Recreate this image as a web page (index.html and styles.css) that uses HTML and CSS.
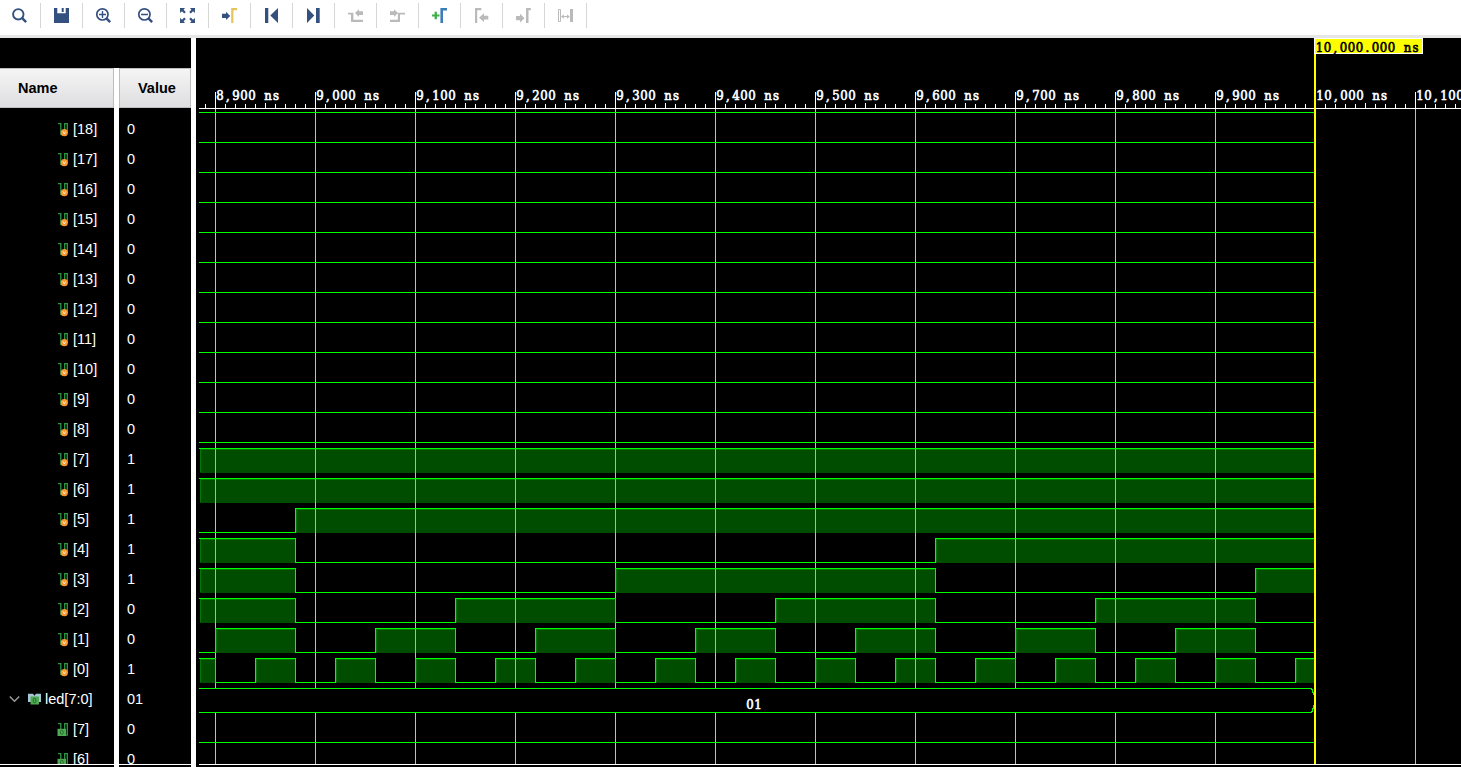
FILE: index.html
```html
<!DOCTYPE html>
<html lang="en">
<head>
<meta charset="utf-8">
<title>Waveform</title>
<link rel="stylesheet" href="styles.css">
</head>
<body>
<div class="toolbar">
  <span class="tool"><svg class="ico navy"><circle cx="6.3" cy="6.3" r="5.2" fill="none" stroke="#34507f" stroke-width="1.9"/><path d="M10 10l1.3-.4 3.7 3.7-1.7 1.7-3.5-3.5z"/></svg></span>
  <span class="tool"><svg class="ico navy"><path d="M0 0h3.3v5.3h8.4V0H15v15H0z"/><path d="M7.7 0h2v4h-2z"/></svg></span>
  <span class="tool"><svg class="ico navy"><circle cx="6.4" cy="6.4" r="5.6" fill="none" stroke="#34507f" stroke-width="1.7"/><path d="M10 10l1.3-.4 3.7 3.7-1.7 1.7-3.5-3.5zM3 5.8h7v1.4H3zM5.8 3h1.4v7H5.8z"/></svg></span>
  <span class="tool"><svg class="ico navy"><circle cx="6.4" cy="6.4" r="5.6" fill="none" stroke="#34507f" stroke-width="1.7"/><path d="M10 10l1.3-.4 3.7 3.7-1.7 1.7-3.5-3.5zM3 5.8h7v1.4H3z"/></svg></span>
  <span class="tool"><svg class="ico navy"><path id="corner" d="M0 0h5L3.6 1.7l2.2 2.2-1.6 1.6L2 3.3.1 5z"/><use href="#corner" transform="matrix(-1 0 0 1 15 0)"/><use href="#corner" transform="matrix(1 0 0 -1 0 15)"/><use href="#corner" transform="matrix(-1 0 0 -1 15 15)"/></svg></span>
  <span class="tool"><svg class="ico navy"><path d="M0 5.7h4V3.8L8.2 8 4 12v-2H0z"/><path fill="#e5c35d" d="M9.2 0H15v2.3h-3.6V15H9.2z"/></svg></span>
  <span class="tool"><svg class="ico navy"><path d="M1 0h3.3v15H1zM14 0v15L6.3 7.5z"/></svg></span>
  <span class="tool"><svg class="ico navy"><path d="M1 0v15l7.3-7.5zM10 0h3.7v15H10z"/></svg></span>
  <span class="tool"><svg class="ico gray"><path d="M0 4.7h5.4v7H15V14H3V6.5H0zM15 3.3h-4V1.300L7 5l4 3.900V6.900h4z"/></svg></span>
  <span class="tool"><svg class="ico gray"><path d="M15 4.7h-7.200v7H0V14h10V6.500h5zM0 3.300h4V1.300L8 5 4 8.900V6.900H0z"/></svg></span>
  <span class="tool"><svg class="ico"><path fill="#3fae49" d="M0 6.4h2.6V3.8h2.3v2.6h2.6v2.2H4.9v2.6H2.6V8.6H0z"/><path fill="#3c7db8" d="M8.4 0H15v2.4h-4V15H8.4z"/></svg></span>
  <span class="tool"><svg class="ico gray"><path d="M1 0h6.3v2.2H3.2V15H1zM14.3 7.7H10V5.3L5 9.7l5 4.3v-2.4h4.3z"/></svg></span>
  <span class="tool"><svg class="ico gray"><path d="M10 0h4.8v2.2h-2.300V15H10zM0 8h4V5.700l4.500 4.500L4 14.600v-2.400H0z"/></svg></span>
  <span class="tool"><svg class="ico gray"><path fill="none" stroke="#bababa" d="M.5 1.5h2v12h-2z"/><path d="M12 1h3v13h-3zM3 8.6l2.8-2.200V8H9V6.400l2.800 2.200L9 10.800V9H5.800v1.800z"/></svg></span>
</div>
<div class="viewer">
  <div class="side">
    <div class="spacer"></div>
    <div class="cols">
      <div class="col"><div class="head name">Name</div><div class="list" id="names"></div></div>
      <div class="gap"></div>
      <div class="col"><div class="head value">Value</div><div class="list" id="values"></div></div>
    </div>
  </div>
  <div class="gap"></div>
  <svg class="wave" id="wave" viewBox="196 38 1265 729"></svg>
</div>
<svg class="defs">
  <symbol id="reg" viewBox="0 0 11 14"><path d="M0 .7h2.8v10.600h3M6.700 8V.7h2.600V10" fill="none" stroke="#2f9544" stroke-width="1.3"/><circle cx="6.3" cy="9.7" r="3.6" fill="#f8962f"/><path d="M4.900 8.300l1.400 2.700 1.400-2.700" fill="none" stroke="#fff3e0" stroke-width=".9"/></symbol>
  <symbol id="out" viewBox="0 0 11 14"><path d="M0 .7h2.8V6M6.700 6V.7h2.600v11.500H8" fill="none" stroke="#2f9544" stroke-width="1.3"/><path d="M-.5 5.800h8.500V13h-8.500z" fill="#4fa953"/><rect x="2.5" y="7.3" width="2.6" height="4" rx="1.2" fill="none" stroke="#256b2b"/></symbol>
</svg>
<script src="wave.js"></script>
</body>
</html>
```

FILE: styles.css
```css
body { margin: 0; height: 767px; overflow: hidden; background: #fff; font-family: "Liberation Sans", Arial, sans-serif; font-size: 14.5px; }
.toolbar { display: flex; box-sizing: border-box; height: 38px; padding-top: 3px; border-bottom: 3px solid #e6e6e6; overflow: hidden; }
.tool { box-sizing: border-box; width: 42px; height: 25px; padding: 5px 0 0 13px; border-right: 1px solid #d6d6d6; }
.tool:first-child { width: 41px; padding-left: 12px; }
.ico { display: block; width: 16px; height: 16px; overflow: visible; }
.navy { fill: #34507f; }
.gray { fill: #bababa; }
.viewer { display: flex; height: 729px; background: #000; }
.side { display: flex; flex-direction: column; width: 191px; }
.spacer { height: 30px; }
.cols { display: flex; height: 699px; }
.col { width: 72px; height: 696px; border-bottom: 1px solid #fff; overflow: hidden; }
.col:first-child { width: 114px; }
.gap { width: 5px; background: #fff; }
.head { box-sizing: border-box; height: 40px; line-height: 39px; border: 1px solid #bdbdbd; border-left: 0; background: linear-gradient(#f5f5f5, #dedee0); color: #000; font-weight: bold; }
.name { padding-left: 18px; }
.value { padding-left: 18px; border-left: 1px solid #bdbdbd; }
.list { padding-top: 6px; color: #fff; }
.row { display: flex; align-items: center; height: 30px; }
#names .row { padding-left: 58px; }
#names .group { padding-left: 9px; }
#values .row { padding-left: 8px; }
.bit { width: 11px; height: 14px; margin-right: 4px; margin-top: 1px; overflow: visible; }
#reg, #out { overflow: visible; }
.chevron { width: 11px; height: 8px; margin-right: 8px; }
.bus { width: 13px; height: 12px; margin-right: 4px; }
.wave { display: block; width: 1265px; height: 729px; shape-rendering: crispEdges; }
.wave text { font: 13px "DejaVu Serif Condensed", "DejaVu Serif", serif; font-stretch: semi-condensed; fill: #fff; stroke: #fff; stroke-width: 0.6px; white-space: pre; }
.wave .stamp { fill: #000; stroke: #000; }
.grid { fill: #bebebe; }
.axis { fill: #fff; }
.fill { fill: #00ff00; fill-opacity: 0.3; }
.flat { fill: #00ff00; }
.line { fill: none; stroke: #00ff00; stroke-width: 1; }
.glow { fill: #00ff00; fill-opacity: 0.25; }
.defs { position: absolute; width: 0; height: 0; }
```

FILE: wave.js
```javascript
const START = 199, END = 1314;
const every = (from, step) => {
  const edges = [];
  for (let x = from; x < END; x += step) edges.push(x);
  return edges;
};
// Each signal: initial level and the x positions where it toggles.
const signals = {
  7: [1, []], 6: [1, []], 5: [0, [295]], 4: [1, [295, 935]],
  3: [1, every(295, 320)], 2: [1, every(295, 160)],
  1: [0, every(215, 80)], 0: [1, every(215, 40)]
};
const values = [0, 0, 0, 0, 0, 0, 0, 0, 0, 0, 0, 1, 1, 1, 1, 1, 0, 0, 1];

let names = '', vals = '', svg = '';
values.forEach((v, i) => {
  names += `<div class="row"><svg class="bit"><use href="#reg"/></svg>[${18 - i}]</div>`;
  vals += `<div class="row">${v}</div>`;
});
names += `<div class="row group"><svg class="chevron" viewBox="0 0 11 8"><path d="M.8 1.5l4.7 4.7 4.7-4.7" fill="none" stroke="#999" stroke-width="1.5"/></svg><svg class="bus" viewBox="0 0 13 12"><path d="M0 .8h5l1.5 2L8 .8h5V9H0z" fill="#a5c6d3"/><path d="M2.5 3.5h8.5V11.5H2.5z" fill="#4fa953"/><rect x="5.3" y="5.2" width="2.5" height="4.5" rx="1.2" fill="none" stroke="#256b2b"/></svg>led[7:0]</div>`;
vals += '<div class="row">01</div>';
for (const n of [7, 6]) {
  names += `<div class="row"><svg class="bit"><use href="#out"/></svg>[${n}]</div>`;
  vals += '<div class="row">0</div>';
}
document.getElementById('names').innerHTML = names;
document.getElementById('values').innerHTML = vals;

const rect = (cls, x, y, w, h) => `<rect class="${cls}" x="${x}" y="${y}" width="${w}" height="${h}"/>`;
// Fixed 8px character cells; narrow punctuation is centred in its cell.
const label = (cls, x, y, s) => `<text class="${cls}" y="${y}" x="${[...s].map((c, i) => x + i * 8 + (/[,.]/.test(c) ? 2 : c === 's' ? 1 : .3)).join(' ')}">${s}</text>`;

for (let x = 215; x < 1461; x += 100) svg += rect('grid', x, 109, 1, 655);
for (let y = 112; y <= 442; y += 30) svg += rect('flat', START, y, END - START, 1);
for (const bit in signals) {
  const hi = 448 + (7 - bit) * 30, lo = hi + 24;
  let [level, edges] = signals[bit];
  let x = START, path = `M${START} ${(level ? hi : lo) + .5}`;
  for (const e of [...edges, END]) {
    if (level) {
      svg += rect('fill', x + 1, hi + 1, e - x - 1, 24);
      svg += rect('glow', x + 1, hi + 1, e - x - 2, 1);
      svg += rect('glow', x + 1, hi + 2, 1, 22);
    }
    path += `H${e === END ? END : e + .5}`;
    if (e !== END) {
      level = 1 - level;
      path += `V${(level ? hi : lo) + .5}`;
    }
    x = e;
  }
  svg += `<path class="line" d="${path}"/>`;
}
svg += '<rect x="199" y="688" width="1115" height="25" fill="#000"/>';
svg += '<path class="line" d="M199 688.5H1311.5V689.5H1312.5V692.5H1313.5V695M199 712.5H1311.5V711.5H1312.5V708.5H1313.5V705"/>';
svg += rect('flat', START, 742, END - START, 1);
svg += label('', 746, 709, '01');

// Time axis
svg += rect('axis', START, 108, 1262, 1) + rect('axis', START, 764, 1262, 1);
for (let x = 205; x < 1461; x += 10) {
  const n = (x - 215) / 10;
  const h = n % 10 === 0 ? 16 : n % 5 === 0 ? 5 : 4;
  svg += rect('axis', x, 108 - h, 1, h);
}
for (let i = 0; i < 13; i++) {
  const t = (8900 + i * 100).toLocaleString('en-US');
  svg += label('', 216 + i * 100, 100, `${t} ns`);
}

// Cursor
svg += '<rect x="1314" y="54" width="2" height="710" fill="#ff0"/>';
svg += '<rect x="1314.5" y="38.5" width="108" height="15" fill="#ff0" stroke="#fff"/>';
svg += label('stamp', 1315.5, 52, '10,000.000 ns');
document.getElementById('wave').innerHTML = svg;
```
